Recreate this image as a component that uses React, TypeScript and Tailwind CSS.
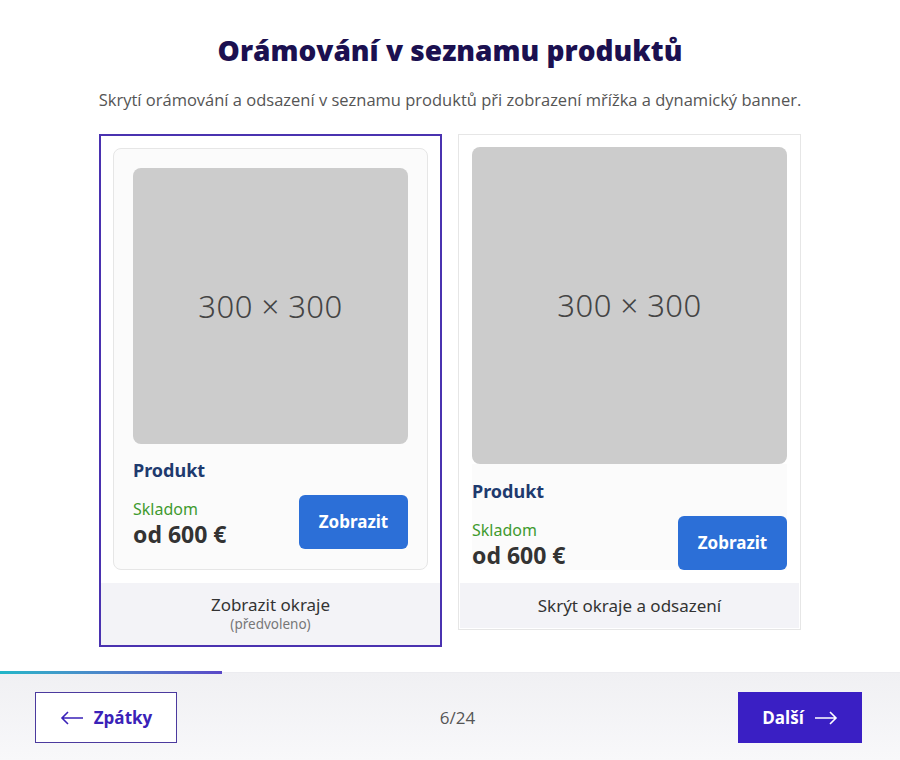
import React from "react";

function Placeholder({ className }: { className: string }) {
  return (
    <div className={`bg-[#cccccc] rounded-[8px] flex items-center justify-center ${className}`}>
      <span className="text-[31px] text-[#444] font-light tracking-[0.5px]" style={{ fontFamily: '"Noto Sans", sans-serif' }}>
        300 × 300
      </span>
    </div>
  );
}

function ProductInfo() {
  return (
    <>
      <div className="text-[18px] font-bold text-[#1e3a6e] leading-none">Produkt</div>
      <div className="flex items-end justify-between mt-[16px]">
        <div className="flex flex-col">
          <span className="text-[16px] text-[#3f9a2e] leading-[20px]">Skladom</span>
          <span className="text-[23px] font-bold text-[#333] leading-[30px]">od 600 €</span>
        </div>
        <div className="w-[109px] h-[54px] bg-[#2c6fd7] rounded-[6px] flex items-center justify-center text-white font-bold text-[17px]">
          Zobrazit
        </div>
      </div>
    </>
  );
}

export default function App() {
  const ui = { fontFamily: '"Open Sans", "Noto Sans", sans-serif' };
  const card = { fontFamily: '"Noto Sans", "Open Sans", sans-serif' };
  return (
    <div className="w-[900px] h-[760px] bg-white flex flex-col" style={ui}>
      <div className="flex-1 flex flex-col items-center">
        <h1 className="mt-[32px] text-[28px] font-extrabold text-[#1b1050] leading-[36px]">
          Orámování v seznamu produktů
        </h1>
        <p className="mt-[21px] text-[16.5px] text-[#555] leading-[22px]">
          Skrytí orámování a odsazení v seznamu produktů při zobrazení mřížka a dynamický banner.
        </p>
        <div className="mt-[23px] flex gap-[16px] items-start" style={card}>
          {/* Left card (selected) */}
          <div className="w-[343px] h-[513px] border-2 border-[#4a32b0] flex flex-col">
            <div className="px-[12px] pt-[12px]">
              <div className="h-[422px] bg-[#fbfbfb] border border-[#e6e6e6] rounded-[8px] px-[19px] pt-[19px]">
                <Placeholder className="h-[276px]" />
                <div className="mt-[17px]">
                  <ProductInfo />
                </div>
              </div>
            </div>
            <div className="mt-[13px] flex-1 bg-[#f3f3f7] flex flex-col items-center pt-[12px]">
              <span className="text-[17px] text-[#333] leading-[20px]">Zobrazit okraje</span>
              <span className="mt-[1px] text-[13.5px] text-[#777] leading-[16px]">(předvoleno)</span>
            </div>
          </div>
          {/* Right card */}
          <div className="w-[343px] h-[496px] border border-[#e6e6e6] flex flex-col px-[1px] pb-[1px]">
            <div className="px-[12px] pt-[12px]">
              <Placeholder className="h-[317px]" />
              <div className="bg-[#fbfbfb] pt-[18px] h-[106px]">
                <ProductInfo />
              </div>
            </div>
            <div className="mt-[13px] flex-1 bg-[#f3f3f7] flex items-center justify-center">
              <span className="text-[17px] text-[#333]">Skrýt okraje a odsazení</span>
            </div>
          </div>
        </div>
      </div>
      {/* Footer */}
      <div className="h-[88px] relative bg-gradient-to-b from-[#f0f0f3] to-[#f8f8fa] border-t border-[#ececf0]">
        <div className="absolute left-0 top-[-2px] h-[3px] w-[222px] bg-gradient-to-r from-[#1fb6c8] to-[#5a48c8]" />
        <div className="h-full flex items-center justify-between pl-[35px] pr-[38px] pt-[2px]">
          <div className="w-[142px] h-[51px] bg-white border border-[#4b3a9e] flex items-center justify-center gap-[10px] text-[#3a22b8] font-bold text-[17px]">
            <svg width="24" height="14" viewBox="0 0 24 14" fill="none" stroke="#3a22b8" strokeWidth="1.6">
              <path d="M23 7H2M8 1L2 7l6 6" />
            </svg>
            Zpátky
          </div>
          <span className="text-[17px] text-[#555]">6/24</span>
          <div className="w-[124px] h-[51px] bg-[#3a1fc4] flex items-center justify-center gap-[10px] text-white font-bold text-[17px]">
            Další
            <svg width="24" height="14" viewBox="0 0 24 14" fill="none" stroke="#fff" strokeWidth="1.6">
              <path d="M1 7h21M16 1l6 6-6 6" />
            </svg>
          </div>
        </div>
      </div>
    </div>
  );
}
